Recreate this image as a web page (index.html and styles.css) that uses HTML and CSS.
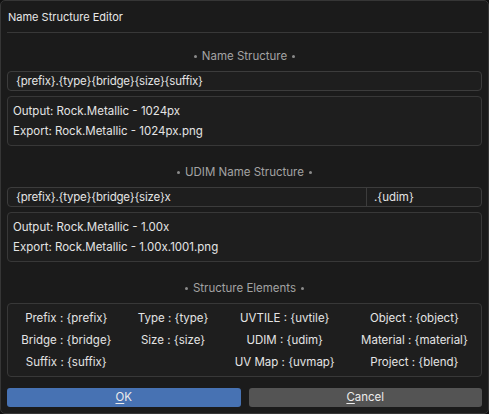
FILE: index.html
```html
<!DOCTYPE html>
<html>
<head>
<meta charset="utf-8">
<link rel="stylesheet" href="styles.css">
</head>
<body>
<div class="window">
  <div class="title">Name Structure Editor</div>
  <div class="sep"></div>

  <div class="header h-first"><span class="dot"></span>Name Structure<span class="dot"></span></div>
  <div class="field"><span class="field-main">{prefix}.{type}{bridge}{size}{suffix}</span></div>
  <div class="box">
    <div class="line">Output: Rock.Metallic - 1024px</div>
    <div class="line">Export: Rock.Metallic - 1024px.png</div>
  </div>

  <div class="header"><span class="dot"></span>UDIM Name Structure<span class="dot"></span></div>
  <div class="field split">
    <span class="field-main">{prefix}.{type}{bridge}{size}x</span>
    <span class="field-side">.{udim}</span>
  </div>
  <div class="box">
    <div class="line">Output: Rock.Metallic - 1.00x</div>
    <div class="line">Export: Rock.Metallic - 1.00x.1001.png</div>
  </div>

  <div class="header"><span class="dot"></span>Structure Elements<span class="dot"></span></div>
  <div class="box elements">
    <div class="cell">Prefix : {prefix}</div>
    <div class="cell">Type : {type}</div>
    <div class="cell">UVTILE : {uvtile}</div>
    <div class="cell">Object : {object}</div>
    <div class="cell">Bridge : {bridge}</div>
    <div class="cell">Size : {size}</div>
    <div class="cell">UDIM : {udim}</div>
    <div class="cell">Material : {material}</div>
    <div class="cell">Suffix : {suffix}</div>
    <div class="cell"></div>
    <div class="cell">UV Map : {uvmap}</div>
    <div class="cell">Project : {blend}</div>
  </div>

  <div class="buttons">
    <div class="btn ok"><u>O</u>K</div>
    <div class="btn cancel"><u>C</u>ancel</div>
  </div>
</div>
</body>
</html>
```

FILE: styles.css
```css
* { box-sizing: border-box; }
html, body {
  margin: 0;
  padding: 0;
  background: #101010;
}
body {
  width: 489px;
  height: 414px;
  font-family: Inter, "Noto Sans", sans-serif;
  font-size: 11.5px;
  color: #e4e4e4;
}
.window {
  width: 489px;
  height: 414px;
  background: #1b1b1b;
  border: 1px solid #363636;
  border-radius: 5px;
  padding: 0 6px;
  display: flex;
  flex-direction: column;
}
.title {
  height: 31px;
  line-height: 32px;
  padding-left: 1px;
  font-size: 11px;
  color: #e8e8e8;
}
.sep {
  height: 1px;
  background: #383838;
}
.header {
  height: 20px;
  margin-top: 16px;
  display: flex;
  align-items: center;
  justify-content: center;
  color: #a3a3a3;
  font-size: 11.5px;
}
.header.h-first { margin-top: 13px; }
.dot {
  width: 3px;
  height: 3px;
  border-radius: 50%;
  background: #8a8a8a;
  margin: 0 5px;
}
.field {
  margin-top: 5px;
  height: 20px;
  border: 1px solid #3c3c3c;
  border-radius: 4px;
  background: #1e1e1e;
  display: flex;
  align-items: center;
}
.field-main {
  flex: 1;
  padding-left: 8px;
  height: 100%;
  line-height: 18px;
  letter-spacing: -0.2px;
}
.split .field-main {
  border-right: 1px solid #3c3c3c;
}
.field-side {
  width: 114px;
  padding-left: 7px;
  line-height: 18px;
}
.box {
  margin-top: 5px;
  border: 1px solid #383838;
  border-radius: 4px;
  background: #1e1e1e;
  padding: 4px 5px;
}
.line {
  height: 20px;
  line-height: 20px;
}
.elements {
  height: 74px;
  padding: 3px 0;
  display: grid;
  grid-template-columns: auto auto auto auto;
  grid-auto-rows: 22px;
}
.cell {
  text-align: center;
  line-height: 22px;
  white-space: nowrap;
}
.buttons {
  margin-top: 11px;
  display: flex;
  gap: 8px;
}
.btn {
  flex: 1;
  height: 19px;
  line-height: 19px;
  border-radius: 3px;
  text-align: center;
  color: #ececec;
}
.btn u {
  text-underline-offset: 2px;
}
.ok { background: #4772b3; }
.cancel { background: #545454; }
```
